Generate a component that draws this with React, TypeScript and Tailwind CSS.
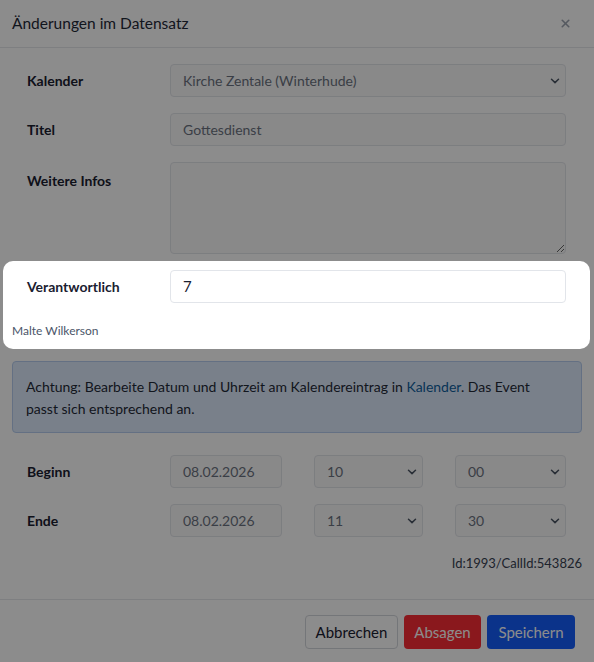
import { X } from "lucide-react";

const inputBase =
  "h-[33px] rounded-[4px] border border-[#e2e5ea] px-3 flex items-center text-[14px]";

function Label({ children, top }: { children: string; top?: boolean }) {
  return (
    <div
      className={
        "text-[14px] font-bold text-[#1a2030] " + (top ? "pt-[8px]" : "flex h-[33px] items-center")
      }
    >
      {children}
    </div>
  );
}

function Chevron() {
  return (
    <svg width="10" height="6" viewBox="0 0 10 6" fill="none" className="text-[#4b5563]">
      <path d="M1.5 1.2l3.5 3.4 3.5-3.4" stroke="currentColor" strokeWidth="1.5" strokeLinecap="round" strokeLinejoin="round" />
    </svg>
  );
}

function Select({ value }: { value: string }) {
  return (
    <div className={inputBase + " justify-between !pr-[5px] bg-[#fafafa] text-[#6b7280]"}>
      <span>{value}</span>
      <Chevron />
    </div>
  );
}

function TimeRow({ label, date, hour, minute }: { label: string; date: string; hour: string; minute: string }) {
  return (
    <div className="grid grid-cols-[143px_112px_1fr_109px_1fr_111px] items-center">
      <Label>{label}</Label>
      <div className={inputBase + " bg-[#fafafa] text-[#6b7280]"}>{date}</div>
      <div />
      <Select value={hour} />
      <div />
      <Select value={minute} />
    </div>
  );
}

export default function App() {
  return (
    <div className="relative min-h-[662px] overflow-hidden bg-white font-['Lato',sans-serif] text-[#1a2030]">
      <header className="flex h-[48px] items-center justify-between border-b border-[#e5e7eb] pl-3 pr-[22px]">
        <h1 className="text-[15.5px] text-[#1f2937]">Änderungen im Datensatz</h1>
        <X size={13} strokeWidth={3} className="text-[#9ca3af]" />
      </header>

      <div className="px-3 pt-4">
        <div className="flex flex-col gap-[16px] pl-[15px] pr-[16px]">
          <div className="grid grid-cols-[143px_1fr]">
            <Label>Kalender</Label>
            <Select value="Kirche Zentale (Winterhude)" />
          </div>
          <div className="grid grid-cols-[143px_1fr]">
            <Label>Titel</Label>
            <div className={inputBase + " bg-[#fafafa] text-[#6b7280]"}>Gottesdienst</div>
          </div>
          <div className="grid grid-cols-[143px_1fr]">
            <Label top>Weitere Infos</Label>
            <textarea
              readOnly
              className="block h-[92px] w-full rounded-[4px] border border-[#e2e5ea] bg-[#fafafa] outline-none"
            />
          </div>
          <div className="grid grid-cols-[143px_1fr]">
            <Label>Verantwortlich</Label>
            <div className={inputBase + " bg-white text-[#1a2030] text-[15px]"}>7</div>
          </div>
        </div>
        <div className="mt-[20px] text-[12px] leading-[16px] text-[#4b5569]">Malte Wilkerson</div>

        <div className="mt-[22px] rounded-[4px] border border-[#b6cdef] bg-[#dde9fb] pb-[12px] pl-[13px] pr-[24px] pt-[14px] text-[14px] leading-[22px] text-[#1f2937]">
          Achtung: Bearbeite Datum und Uhrzeit am Kalendereintrag in{" "}
          <span className="text-[#0f5f9e]">Kalender</span>. Das Event passt sich entsprechend an.
        </div>

        <div className="mt-[22px] flex flex-col gap-[16px] pl-[15px] pr-[16px]">
          <TimeRow label="Beginn" date="08.02.2026" hour="10" minute="00" />
          <TimeRow label="Ende" date="08.02.2026" hour="11" minute="30" />
        </div>

        <div className="mt-[17px] text-right text-[13px] leading-[18px] text-[#374151]">Id:1993/CallId:543826</div>
      </div>

      <footer className="mt-[27px] flex justify-end gap-[6px] border-t border-[#e5e7eb] pr-[19px] pt-[15px]">
        <button className="h-[34px] w-[93px] rounded-[4px] border border-[#d4d7dc] bg-white text-[15px] text-[#1a2030]">
          Abbrechen
        </button>
        <button className="h-[34px] w-[77px] rounded-[4px] bg-[#fb2c36] text-[15px] text-white">Absagen</button>
        <button className="h-[34px] w-[88px] rounded-[4px] bg-[#155dfc] text-[15px] text-white">Speichern</button>
      </footer>

      {/* spotlight over the Verantwortlich field */}
      <div className="pointer-events-none absolute left-[3px] top-[261px] h-[88px] w-[587px] rounded-[10px] shadow-[0_0_0_2000px_rgba(0,0,0,0.45)]" />
    </div>
  );
}
